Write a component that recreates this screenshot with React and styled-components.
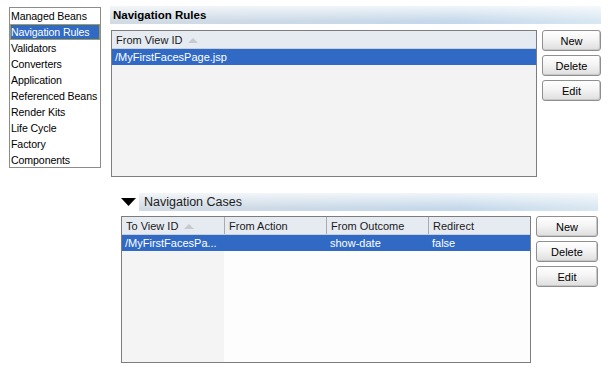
import React from 'react'
import styled, { createGlobalStyle } from 'styled-components'

const GlobalStyle = createGlobalStyle`
	html, body {
		margin: 0;
		padding: 0;
		background: #ffffff;
	}
	body {
		font-family: "Liberation Sans", Arial, sans-serif;
		font-size: 11px;
		color: #000;
	}
`;

const Page = styled.div`
	display: flex;
	align-items: flex-start;
	width: 608px;
	height: 380px;
	padding: 6px 0 0 9px;
	box-sizing: border-box;
`;

const SideList = styled.ul`
	list-style: none;
	margin: 1px 0 0 0;
	padding: 0;
	width: 92px;
	height: 161px;
	box-sizing: border-box;
	border: 1px solid #8c8c8c;
	background: #fff;
	font-size: 10.6px;
	letter-spacing: -0.1px;
`;

const SideItem = styled.li`
	height: 16px;
	line-height: 16px;
	padding-left: 1px;
	white-space: nowrap;
	box-sizing: border-box;
	background: ${p => (p.$active ? '#316ac5' : 'transparent')};
	color: ${p => (p.$active ? '#fff' : '#000')};
	outline: ${p => (p.$active ? '1px solid #a39d55' : 'none')};
	outline-offset: -1px;
`;

const Main = styled.div`
	margin-left: 10px;
	width: 490px;
	display: flex;
	flex-direction: column;
`;

const TitleRow = styled.div`
	display: flex;
	margin-left: -1px;
`;

const SectionBar = styled.div`
	height: 18px;
	display: flex;
	align-items: center;
	padding-left: ${p => (p.$bold ? '3px' : '5px')};
	font-weight: ${p => (p.$bold ? 'bold' : 'normal')};
	font-size: ${p => (p.$bold ? '11.5px' : '12.5px')};
	color: ${p => (p.$bold ? '#000' : '#1c1c1c')};
	background:
		linear-gradient(to bottom, rgba(255, 255, 255, 0.75), rgba(255, 255, 255, 0) 85%),
		linear-gradient(to right, #d2dbe4, #c4d8ea 70%, #d9e7f2);
	flex: 1;
`;

const Body = styled.div`
	display: flex;
	align-items: flex-start;
	gap: ${p => p.$gap}px;
	margin-top: ${p => p.$top}px;
`;

const Table = styled.div`
	width: ${p => p.$width}px;
	height: 147px;
	box-sizing: border-box;
	border: 1px solid #7d7d7d;
	display: flex;
	flex-direction: column;
	background: ${p => p.$fill};
`;

const HeadRow = styled.div`
	display: grid;
	grid-template-columns: ${p => p.$cols};
	height: 17px;
	background: #e6ebf2;
	border-bottom: 1px solid #c9d0d8;
`;

const HeadCell = styled.div`
	display: flex;
	align-items: center;
	padding-left: 4px;
	gap: 6px;
	color: #1a1a1a;
	border-right: 1px solid #a8acb0;
	&:last-child {
		border-right: none;
	}
`;

const SortArrow = styled.span`
	width: 0;
	height: 0;
	border-left: 5px solid transparent;
	border-right: 5px solid transparent;
	border-bottom: 5px solid #c6cacd;
	margin-top: 1px;
`;

const Row = styled.div`
	display: grid;
	grid-template-columns: ${p => p.$cols};
	height: 16px;
	line-height: 16px;
	background: ${p => (p.$selected ? '#316ac5' : 'transparent')};
	color: ${p => (p.$selected ? '#fff' : '#000')};
`;

const Cell = styled.div`
	padding-left: 3px;
	white-space: nowrap;
	overflow: hidden;
`;

const ButtonStack = styled.div`
	display: flex;
	flex-direction: column;
	gap: 4px;
`;

const Button = styled.button`
	width: ${p => p.$width}px;
	height: 21px;
	font-family: "Liberation Sans", Arial, sans-serif;
	font-size: 11px;
	color: #000;
	border: 1px solid #8f8f8f;
	border-radius: 3px;
	background: linear-gradient(to bottom, #ffffff 0%, #f4f4f4 45%, #dedede 100%);
	box-shadow: inset -1px -1px 0 #c8c8c8;
	padding: 0;
	cursor: pointer;
`;

const CasesSection = styled.div`
	margin-top: 16px;
	padding-left: 10px;
	display: flex;
	flex-direction: column;
`;

const CasesTop = styled.div`
	display: flex;
	align-items: center;
	width: 477px;
`;

const Toggle = styled.svg`
	width: 15px;
	height: 8px;
	margin-right: 3px;
	flex: none;
`;

const rulesCols = '1fr';
const casesCols = '103px 102px 102px 1fr';

export default function App() {
	const sideItems = [
		'Managed Beans',
		'Navigation Rules',
		'Validators',
		'Converters',
		'Application',
		'Referenced Beans',
		'Render Kits',
		'Life Cycle',
		'Factory',
		'Components',
	];

	return (
		<>
			<GlobalStyle />
			<Page>
				<SideList>
					{sideItems.map(item => (
						<SideItem key={item} $active={item === 'Navigation Rules'}>{item}</SideItem>
					))}
				</SideList>
				<Main>
					<TitleRow>
						<SectionBar $bold>Navigation Rules</SectionBar>
					</TitleRow>
					<Body $gap={5} $top={6}>
						<Table $width={430} $fill="#f3f3f3">
							<HeadRow $cols={rulesCols}>
								<HeadCell>From View ID <SortArrow /></HeadCell>
							</HeadRow>
							<Row $cols={rulesCols} $selected>
								<Cell>/MyFirstFacesPage.jsp</Cell>
							</Row>
						</Table>
						<ButtonStack>
							<Button $width={59}>New</Button>
							<Button $width={59}>Delete</Button>
							<Button $width={59}>Edit</Button>
						</ButtonStack>
					</Body>

					<CasesSection>
						<CasesTop>
							<Toggle viewBox="0 0 15 8">
								<polygon points="0,0 15,0 7.5,8" fill="#000" />
							</Toggle>
							<SectionBar>Navigation Cases</SectionBar>
						</CasesTop>
						<Body $gap={5} $top={5}>
							<Table
								$width={410}
								$fill="linear-gradient(to right, #f4f4f4 102px, #fdfdfd 102px)"
							>
								<HeadRow $cols={casesCols}>
									<HeadCell>To View ID <SortArrow /></HeadCell>
									<HeadCell>From Action</HeadCell>
									<HeadCell>From Outcome</HeadCell>
									<HeadCell>Redirect</HeadCell>
								</HeadRow>
								<Row $cols={casesCols} $selected>
									<Cell>/MyFirstFacesPa...</Cell>
									<Cell></Cell>
									<Cell>show-date</Cell>
									<Cell>false</Cell>
								</Row>
							</Table>
							<ButtonStack>
								<Button $width={62}>New</Button>
								<Button $width={62}>Delete</Button>
								<Button $width={62}>Edit</Button>
							</ButtonStack>
						</Body>
					</CasesSection>
				</Main>
			</Page>
		</>
	)
}
